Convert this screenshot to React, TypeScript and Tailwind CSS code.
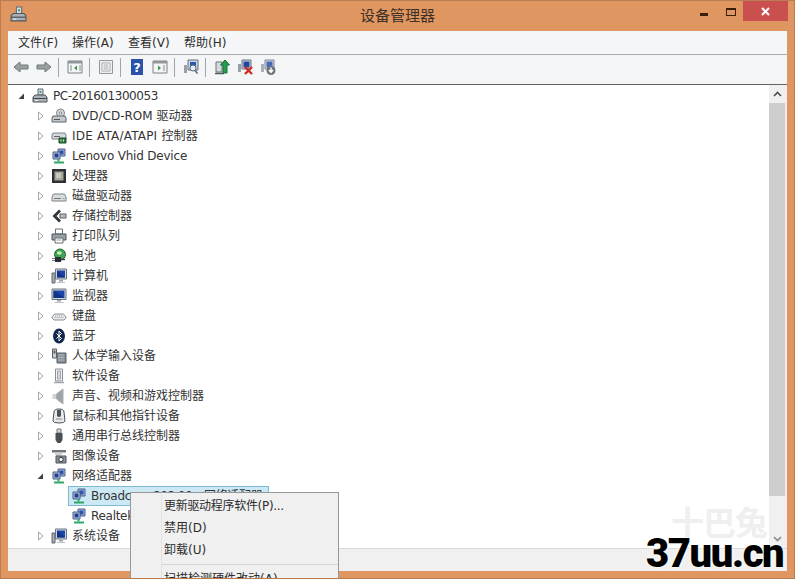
import React from 'react';

const Svg = ({ children, size = 16 }: { children: React.ReactNode; size?: number }) => (
  <svg width={size} height={size} viewBox="0 0 16 16" className="shrink-0">
    {children}
  </svg>
);

// tree icons, drawn roughly as the Windows device classes
const icons: Record<string, React.ReactNode> = {
  root: (
    <>
      <path d="M6 1h5v6H6z" fill="#d8dde2" stroke="#5f6a72" />
      <path d="M7.5 3h2v2h-2z" fill="#44a06a" />
      <path d="M1 9l2-2h10l2 2v5H1z" fill="#aab2b8" stroke="#4d555b" />
      <path d="M1 10h14v1H1z" fill="#40484f" />
      <path d="M3 12.5h3" stroke="#e8eef2" />
    </>
  ),
  dvd: (
    <>
      <circle cx="9.5" cy="5" r="4" fill="#d5d9dc" stroke="#7d858b" />
      <circle cx="9.5" cy="5" r="1.2" fill="#fff" stroke="#7d858b" />
      <path d="M1 10l1-2h12l1 2v4H1z" fill="#c3c8cb" stroke="#5e666c" />
      <path d="M3 11.5h6" stroke="#555" />
    </>
  ),
  ide: (
    <>
      <path d="M1 7l1-2h12l1 2v4H1z" fill="#d5d9dc" stroke="#7b8287" />
      <path d="M3 8.5h6" stroke="#666" />
      <path d="M8 10h7v5H8z" fill="#2f7a3c" stroke="#1f4a28" />
      <path d="M9.5 11.5h1v2h-1zM12 11.5h1v2h-1z" fill="#cfe8c8" />
    </>
  ),
  net: (
    <>
      <path d="M7 1h7v7H7z" fill="#9fb3d8" stroke="#4b5f8a" />
      <path d="M8.5 2.5h4v4h-4z" fill="#2c55b0" />
      <path d="M2 4h7v7H2z" fill="#b9c7e2" stroke="#46597f" />
      <path d="M3.5 5.5h4v4h-4z" fill="#1d3f96" />
      <path d="M7.5 11v2.5" stroke="#2fa866" strokeWidth="2" />
      <path d="M3 14.5h10" stroke="#2fa866" strokeWidth="2" />
    </>
  ),
  cpu: (
    <>
      <path d="M1 1h14v14H1z" fill="#2e3134" />
      <path d="M3.5 3.5h9v9h-9z" fill="#a7a49c" />
      <path d="M5 5h5v5H5z" fill="#c8c6bf" />
    </>
  ),
  disk: (
    <>
      <path d="M1 9l1.5-3h11L15 9v4H1z" fill="#d9dcde" stroke="#7b8287" />
      <path d="M3 10.5h7" stroke="#777" />
      <path d="M12 10.5h1.5" stroke="#6a9" />
    </>
  ),
  storage: (
    <>
      <path d="M8 1.5L1.5 8 8 14.5l2-2L5.5 8 10 3.5z" fill="#31373c" />
      <path d="M9 6h6v4H9z" fill="#b8bec3" stroke="#5a6167" />
    </>
  ),
  printer: (
    <>
      <path d="M4.5 1h7v5h-7z" fill="#fff" stroke="#6a7075" />
      <path d="M1 6h14v6H1z" fill="#9aa1a6" stroke="#4f565b" />
      <path d="M4 10h8v5H4z" fill="#fff" stroke="#6a7075" />
      <path d="M5.5 12h5" stroke="#999" />
    </>
  ),
  battery: (
    <>
      <circle cx="9" cy="6.5" r="5.5" fill="#3fa552" stroke="#1f6b33" />
      <path d="M6 4l3-1 2 2-2 2-3-1z" fill="#c7e8b8" />
      <path d="M4 9h6v5H4z" fill="#2a2f33" />
      <path d="M1 10.5h3M1 12.5h3" stroke="#777" />
      <path d="M10 11.5h4" stroke="#444" strokeWidth="1.5" />
    </>
  ),
  computer: (
    <>
      <path d="M1 5h3v10H1z" fill="#a5abb0" stroke="#62696e" />
      <path d="M4.5 1h11v10h-11z" fill="#cfd6de" stroke="#6c7680" />
      <path d="M6 2.5h8v7H6z" fill="#1c45a8" />
      <path d="M6 2.5l8 7H6z" fill="#133387" />
      <path d="M8 12h4v1.5H8z" fill="#9aa1a6" />
      <path d="M6 14h8v1H6z" fill="#bcc2c7" />
    </>
  ),
  monitor: (
    <>
      <path d="M1 1h14v10.5H1z" fill="#cfd6de" stroke="#6c7680" />
      <path d="M2.5 2.5h11v7.5h-11z" fill="#1c45a8" />
      <path d="M2.5 2.5l11 7.5h-11z" fill="#133387" />
      <path d="M6 12h4v1.5H6z" fill="#9aa1a6" />
      <path d="M3.5 14h9v1h-9z" fill="#bcc2c7" />
    </>
  ),
  keyboard: (
    <>
      <path d="M1 9l2.5-3h9L15 9v1l-2 2H3l-2-2z" fill="#e6e8ea" stroke="#8c9297" />
      <path d="M4 8h8M3.5 9.5h9" stroke="#a2a7ab" strokeDasharray="1 1" />
    </>
  ),
  bluetooth: (
    <>
      <ellipse cx="8" cy="8" rx="6" ry="7.5" fill="#12284f" />
      <path d="M5.5 5.5l5 5L8 13V3l2.5 2.5-5 5" fill="none" stroke="#fff" />
    </>
  ),
  hid: (
    <>
      <path d="M1.5 1h4v9h-4z" fill="#c9ced2" stroke="#5a6167" />
      <path d="M2.5 2.5h2v3h-2z" fill="#55606a" />
      <path d="M6 5h9v10H6z" fill="#878e94" stroke="#555c62" />
      <path d="M7.5 7h6M7.5 9.5h6M7.5 12h6" stroke="#e4e7e9" strokeDasharray="1 1" />
    </>
  ),
  software: (
    <>
      <path d="M4.5 1h7v12h-7z" fill="#f0f1f2" stroke="#8b9196" />
      <path d="M6.5 3h3v8h-3z" fill="#d3d6d9" stroke="#a3a8ac" />
      <path d="M3 14.5h10" stroke="#a0a5a9" strokeWidth="1.5" />
    </>
  ),
  sound: (
    <>
      <path d="M1.5 6h4v5h-4z" fill="#d0d3d6" />
      <path d="M5.5 6L12 1v15l-6.5-5z" fill="#9ea3a7" stroke="#a8adb1" />
    </>
  ),
  mouse: (
    <>
      <path d="M3 4q0-3 5-3t5 3l1 9q0 2-6 2t-6-2z" fill="#e7e9eb" stroke="#4c5358" />
      <path d="M6 2h4v6q-2 2-4 0z" fill="#4c5358" />
      <path d="M5 11h6" stroke="#b5babe" strokeWidth="2" />
    </>
  ),
  usb: (
    <>
      <path d="M6 1h4v4H6z" fill="#d5d8da" stroke="#777" />
      <path d="M4.5 5h7v7l-2 3h-3l-2-3z" fill="#4a4f54" />
    </>
  ),
  camera: (
    <>
      <path d="M1 2h14v2.5H1z" fill="#6f7579" />
      <path d="M3 4.5h10L9 8H5z" fill="#cfd3d6" />
      <path d="M5 8h10v7H5z" fill="#8a9095" stroke="#4e5459" />
      <circle cx="10" cy="11.5" r="2.2" fill="#f2f3f4" stroke="#33383c" />
    </>
  ),
};

const rows: { label: string; icon: string; fit?: string }[] = [
  { label: 'DVD/CD-ROM 驱动器', icon: 'dvd' },
  { label: 'IDE ATA/ATAPI 控制器', icon: 'ide', fit: 'tracking-[0.2px]' },
  { label: 'Lenovo Vhid Device', icon: 'net', fit: 'tracking-[-0.2px]' },
  { label: '处理器', icon: 'cpu' },
  { label: '磁盘驱动器', icon: 'disk' },
  { label: '存储控制器', icon: 'storage' },
  { label: '打印队列', icon: 'printer' },
  { label: '电池', icon: 'battery' },
  { label: '计算机', icon: 'computer' },
  { label: '监视器', icon: 'monitor' },
  { label: '键盘', icon: 'keyboard' },
  { label: '蓝牙', icon: 'bluetooth' },
  { label: '人体学输入设备', icon: 'hid' },
  { label: '软件设备', icon: 'software' },
  { label: '声音、视频和游戏控制器', icon: 'sound' },
  { label: '鼠标和其他指针设备', icon: 'mouse' },
  { label: '通用串行总线控制器', icon: 'usb' },
  { label: '图像设备', icon: 'camera' },
];

const Closed = () => (
  <svg width="9" height="10" viewBox="0 0 9 10" className="shrink-0">
    <path d="M2.5 1l4.5 4-4.5 4z" fill="#fff" stroke="#a6a6a6" />
  </svg>
);

const Open = () => (
  <svg width="9" height="10" viewBox="0 0 9 10" className="shrink-0">
    <path d="M7 2.5V8H1.5z" fill="#404040" />
  </svg>
);

const Row = ({ label, icon, open, fit }: { label: string; icon: string; open?: boolean; fit?: string }) => (
  <div className="flex h-5 items-center pl-[28px]">
    {open ? <Open /> : <Closed />}
    <span className="ml-[6px] mr-[5px] flex">
      <Svg>{icons[icon]}</Svg>
    </span>
    <span className={`whitespace-nowrap ${fit ?? ''}`}>{label}</span>
  </div>
);

const Sep = () => <div className="ml-[6px] mr-[8px] h-[19px] w-px bg-[#a0a4a8]" />;

const Tool = ({ children }: { children: React.ReactNode }) => (
  <span className="flex w-4 justify-center">
    <Svg>{children}</Svg>
  </span>
);

const menus = [
  { label: '文件(F)', width: 'w-[54px]' },
  { label: '操作(A)', width: 'w-14' },
  { label: '查看(V)', width: 'w-14' },
  { label: '帮助(H)', width: 'w-14' },
];

export default function App() {
  return (
    <div className="relative flex h-[579px] w-[795px] flex-col overflow-hidden border border-[#b87d50] bg-[#df9660] text-xs text-[#3a3a3a] [font-family:'DejaVu_Sans','Noto_Sans_CJK_SC',sans-serif]">
      {/* title bar */}
      <div className="grid h-[30px] shrink-0 grid-cols-[1fr_auto_1fr]">
        <div className="pl-[9px] pt-[5px]">
          <Svg size={17}>{icons.root}</Svg>
        </div>
        <div className="pt-[5px] text-[15px] leading-[20px] text-[#3c3028]">设备管理器</div>
        <div className="flex justify-end pr-[6px]">
          <div className="mt-[12px] h-[3px] w-[8px] bg-[#3c1e08]" />
          <div className="ml-[18px] mt-[7px] h-[8px] w-[10px] border border-t-2 border-[#3c1e08]" />
          <div className="ml-[7px] flex h-[20px] w-[45px] items-center justify-center bg-[#c9504f]">
            <svg width="9" height="9" viewBox="0 0 9 9">
              <path d="M1 1l7 7M8 1L1 8" stroke="#fff" strokeWidth="2" />
            </svg>
          </div>
        </div>
      </div>

      {/* client area */}
      <div className="mx-[7px] flex min-h-0 flex-1 flex-col bg-[#f0f0f0]">
        <div className="flex h-[24px] shrink-0 items-center border-b border-[#a9a9a9] bg-[#f5f6f7] pl-[10px] text-[#2c2c2c]">
          {menus.map((m) => (
            <span key={m.label} className={`${m.width} whitespace-nowrap`}>
              {m.label}
            </span>
          ))}
        </div>

        <div className="flex h-[29px] shrink-0 items-center bg-[#f4f5f6] pb-[5px] pl-[5px]">
          <Tool>
            <path d="M1 8l6-5v3h8v4H7v3z" fill="#9a9fa3" stroke="#70767a" />
          </Tool>
          <span className="ml-[7px] flex">
            <Tool>
              <path d="M15 8L9 3v3H1v4h8v3z" fill="#9a9fa3" stroke="#70767a" />
            </Tool>
          </span>
          <Sep />
          <Tool>
            <path d="M1 2h14v12H1z" fill="#f4f5f5" stroke="#7b8287" />
            <path d="M1 2h14v2.5H1z" fill="#8f979d" />
            <path d="M10 6.5v5L7 9z" fill="#3b9a53" />
            <path d="M3 7h2M3 9h2M3 11h2M12 7h2M12 9h2M12 11h2" stroke="#888" />
          </Tool>
          <Sep />
          <Tool>
            <path d="M1.5 1.5h13v13h-13z" fill="#eceeef" stroke="#92999e" />
            <path d="M4 4h8v8H4z" fill="#fff" stroke="#a7acb0" />
            <path d="M5.5 6h5M5.5 8h5M5.5 10h5" stroke="#9aa0a4" />
          </Tool>
          <Sep />
          <Tool>
            <path d="M2 0h12v16H2z" fill="#2a52a8" />
            <text x="8" y="13" textAnchor="middle" fontSize="13" fontWeight="700" fill="#fff">?</text>
          </Tool>
          <span className="ml-[7px] flex">
            <Tool>
              <path d="M1 2h14v12H1z" fill="#f4f5f5" stroke="#7b8287" />
              <path d="M1 2h14v2.5H1z" fill="#8f979d" />
              <path d="M6 6.5v5L9 9z" fill="#3b9a53" />
              <path d="M11 7h2M11 9h2M11 11h2" stroke="#888" />
            </Tool>
          </span>
          <Sep />
          <Tool>
            <path d="M1 6h3v8H1z" fill="#9aa1a6" />
            <path d="M5 1h10v10H5z" fill="#cdd6e2" stroke="#66717c" />
            <path d="M7 3h6v6H7z" fill="#2c55b0" />
            <circle cx="10" cy="9" r="3" fill="#e8eef4" stroke="#5a6b7c" />
            <path d="M12 11.5l2.5 3" stroke="#5a6b7c" strokeWidth="1.5" />
          </Tool>
          <Sep />
          <Tool>
            <path d="M2 3h6v10H2z" fill="#d6dadd" stroke="#6b7277" />
            <path d="M1 14.5h9" stroke="#555" strokeWidth="1.5" />
            <path d="M11 1l4.5 5H13v8H9V6H6.5z" fill="#22a04c" stroke="#16703a" />
          </Tool>
          <span className="ml-[7px] flex">
            <Tool>
              <path d="M1 5h3v8H1z" fill="#9aa1a6" />
              <path d="M5 1h9v9H5z" fill="#cdd6e2" stroke="#66717c" />
              <path d="M6.5 2.5h6v6h-6z" fill="#24479e" />
              <path d="M8 8l7 7M15 8l-7 7" stroke="#cc2b22" strokeWidth="2.4" />
            </Tool>
          </span>
          <span className="ml-[7px] flex">
            <Tool>
              <path d="M1 5h3v8H1z" fill="#aab0b5" />
              <path d="M5 1h9v9H5z" fill="#d2dae4" stroke="#7d8690" />
              <path d="M6.5 2.5h6v6h-6z" fill="#4a68b0" />
              <circle cx="11" cy="11.5" r="4.5" fill="#6e757a" />
              <path d="M11 8.5v4M9 11l2 2.5 2-2.5" stroke="#fff" strokeWidth="1.4" fill="none" />
            </Tool>
          </span>
        </div>

        {/* tree + scrollbar */}
        <div className="flex min-h-0 flex-1 border-t border-[#646464]">
          <div className="min-w-0 flex-1 bg-white pt-px text-[#333]">
            <div className="flex h-5 items-center pl-[9px]">
              <Open />
              <span className="ml-[6px] mr-[5px] flex">
                <Svg>{icons.root}</Svg>
              </span>
              <span className="tracking-[-0.45px]">PC-201601300053</span>
            </div>
            {rows.map((r) => (
              <Row key={r.label} label={r.label} icon={r.icon} fit={r.fit} />
            ))}
            <Row label="网络适配器" icon="net" open />
            <div className="ml-[60px] flex h-5 w-[201px] items-center border border-[#7fb9d6] bg-[#cde8f5] pl-[2px]">
              <span className="mr-[4px] flex">
                <Svg>{icons.net}</Svg>
              </span>
              <span className="whitespace-nowrap tracking-[-0.3px]">Broadcom 802.11n 网络适配器</span>
            </div>
            <div className="ml-[60px] flex h-5 items-center pl-[3px]">
              <span className="mr-[4px] flex">
                <Svg>{icons.net}</Svg>
              </span>
              <span className="whitespace-nowrap tracking-[-0.3px]">Realtek PCIe GBE Family Controller</span>
            </div>
            <Row label="系统设备" icon="computer" />
          </div>

          <div className="flex w-[16px] shrink-0 flex-col bg-[#f0f0f0]">
            <div className="flex h-[18px] items-center justify-center">
              <svg width="9" height="6" viewBox="0 0 9 6">
                <path d="M1 5l3.5-3.5L8 5" fill="none" stroke="#505050" strokeWidth="1.6" />
              </svg>
            </div>
            <div className="h-[393px] bg-[#cdcdcd]" />
            <div className="flex flex-1 items-end justify-center pb-[6px]">
              <svg width="9" height="6" viewBox="0 0 9 6">
                <path d="M1 1l3.5 3.5L8 1" fill="none" stroke="#8a8a8a" strokeWidth="1.6" />
              </svg>
            </div>
          </div>
          <div className="w-[2px] shrink-0 bg-[#f0f0f0]" />
        </div>

        <div className="h-[23px] shrink-0 border-t border-[#d9d9d9] bg-[#f0f0f0]" />
      </div>
      <div className="h-[7px] shrink-0" />

      {/* context menu */}
      <div className="absolute left-[129px] top-[491px] h-[90px] w-[209px] border border-[#979797] bg-[#f0f0f0] pt-[2px] text-[#2c2c2c]">
        <div className="absolute bottom-0 left-[30px] top-0 w-px bg-[#e2e2e2]" />
        <div className="flex h-[22px] items-center pl-[33px] whitespace-nowrap tracking-[-0.3px]">更新驱动程序软件(P)...</div>
        <div className="flex h-[22px] items-center pl-[33px]">禁用(D)</div>
        <div className="flex h-[22px] items-center pl-[33px]">卸载(U)</div>
        <div className="my-[3px] ml-[31px] h-px bg-[#d7d7d7]" />
        <div className="flex h-[22px] items-center pl-[33px] whitespace-nowrap">扫描检测硬件改动(A)</div>
      </div>

      {/* site watermark */}
      <div className="absolute left-[670px] top-[503px] text-[33px] font-bold leading-[40px] tracking-[-1px] text-[#ebebeb]/80">十巴兔</div>
      <div className="absolute left-[645px] top-[531px] text-[40px] font-black leading-[44px] tracking-[-1.4px] text-black [font-family:'Roboto',sans-serif] [text-shadow:0_0_4px_#fff]">37uu.cn</div>
    </div>
  );
}
